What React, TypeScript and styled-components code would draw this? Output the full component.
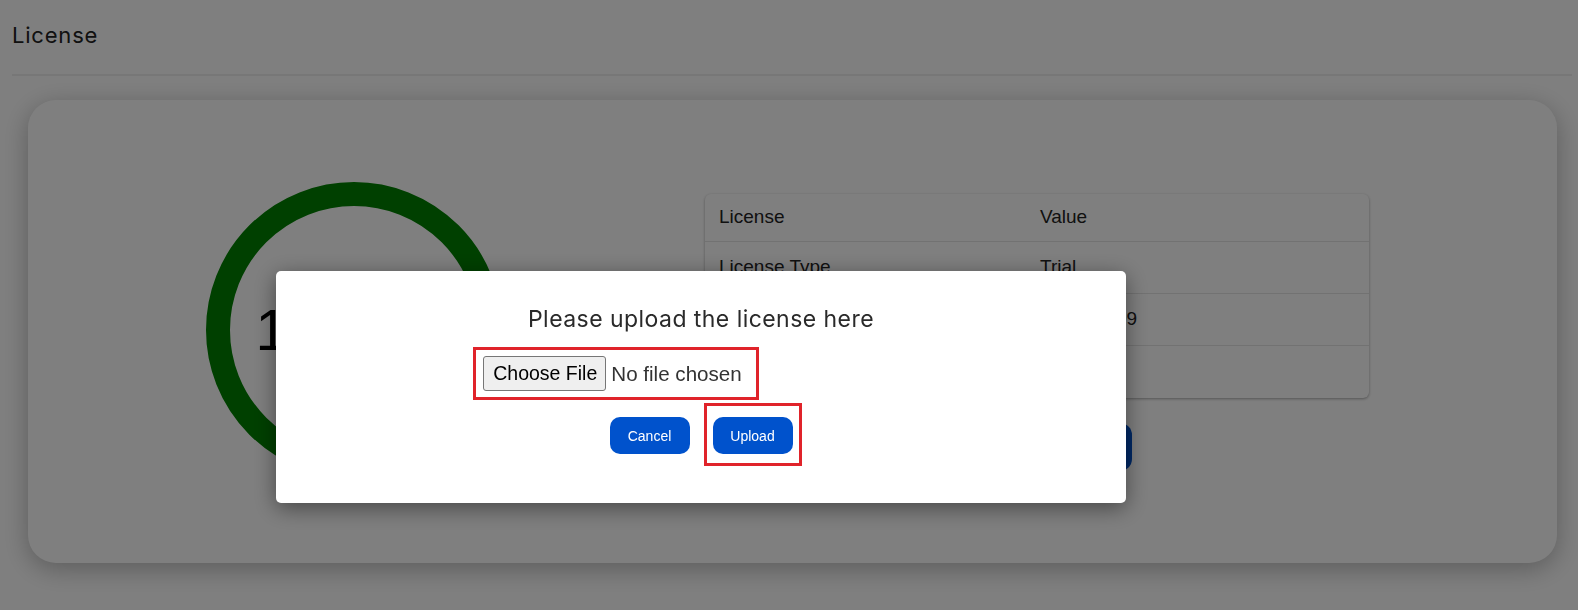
import React from "react";
import styled, { createGlobalStyle } from "styled-components";

const Global = createGlobalStyle`
  html, body { margin: 0; padding: 0; background: #ffffff; }
  body { font-family: "Liberation Sans", Arial, sans-serif; }
  * { box-sizing: border-box; }
`;

const Page = styled.div`
  width: 1578px;
  height: 610px;
  padding: 0 6px 0 12px;
  overflow: hidden;
`;

const PageTitle = styled.h1`
  margin: 0;
  padding: 20px 0 24px;
  font-family: "Inter", sans-serif;
  font-weight: 400;
  font-size: 22px;
  letter-spacing: 0.8px;
  line-height: 30px;
  color: #222;
  border-bottom: 2px solid #eeeeee;
`;

const Card = styled.div`
  margin: 24px 15px 0 16px;
  height: 463px;
  background: #fff;
  border-radius: 28px;
  box-shadow: 0 6px 26px rgba(0, 0, 0, 0.28);
  display: flex;
  align-items: center;
`;

const RingCol = styled.div`
  width: 652px;
  display: flex;
  justify-content: center;
  align-items: center;
`;

const Ring = styled.div`
  display: grid;
  width: 296px;
  height: 296px;
  margin-top: -4px;
  & > * { grid-area: 1 / 1; }
`;

const RingLabel = styled.div`
  align-self: center;
  justify-self: center;
  padding-left: 6px;
  font-family: "Liberation Sans", Arial, sans-serif;
  font-size: 58px;
  color: #000;
  white-space: nowrap;
`;

const InfoCol = styled.div`
  margin-left: 25px;
  width: 664px;
  display: flex;
  flex-direction: column;
  align-items: center;
  gap: 25px;
  margin-top: 1px;
`;

const Table = styled.table`
  width: 664px;
  border-collapse: separate;
  border-spacing: 0;
  border-radius: 6px;
  box-shadow: 0 1px 3px rgba(0, 0, 0, 0.35);
  font-family: "Liberation Sans", Arial, sans-serif;
  font-size: 19px;
  color: #222;
  background: #fff;
`;

const Cell = styled.td<{ $first?: boolean; $head?: boolean; $last?: boolean }>`
  padding: 0 14px;
  height: ${(p) => (p.$head ? "48px" : "52px")};
  width: ${(p) => (p.$first ? "321px" : "auto")};
  border-bottom: ${(p) => (p.$last ? "none" : "1px solid #e4e4e4")};
  text-align: left;
  font-weight: 400;
`;

const MainButton = styled.button`
  width: 190px;
  height: 48px;
  border: none;
  border-radius: 12px;
  background: #0052cc;
  color: #fff;
  font-family: "Liberation Sans", Arial, sans-serif;
  font-size: 17px;
`;

const Overlay = styled.div`
  position: fixed;
  inset: 0;
  background: rgba(0, 0, 0, 0.5);
`;

const Modal = styled.div`
  position: absolute;
  left: 276px;
  top: 271px;
  width: 850px;
  height: 232px;
  background: #fff;
  border-radius: 5px;
  box-shadow: 0 5px 22px rgba(0, 0, 0, 0.45);
  padding-top: 34px;
  display: flex;
  flex-direction: column;
  align-items: center;
`;

const ModalTitle = styled.h2`
  margin: 0;
  font-family: "Inter", sans-serif;
  font-weight: 400;
  font-size: 23px;
  letter-spacing: 0.45px;
  line-height: 28px;
  color: #2a2a2a;
`;

const FileRow = styled.div`
  margin-top: 14px;
  width: 100%;
  display: flex;
  justify-content: center;
  padding-right: 170px;
`;

const Highlight = styled.div<{ $pad: string }>`
  border: 3px solid #e0232a;
  padding: ${(p) => p.$pad};
  display: flex;
  align-items: center;
`;

const ChooseButton = styled.button`
  height: 35px;
  padding: 0 8px 0 9px;
  background: #efefef;
  border: 1px solid #767676;
  border-radius: 3px;
  font-family: "Liberation Sans", Arial, sans-serif;
  font-size: 19.5px;
  color: #000;
`;

const NoFile = styled.span`
  margin-left: 5px;
  font-family: "Liberation Sans", Arial, sans-serif;
  font-size: 20.6px;
  color: #333;
`;

const ActionRow = styled.div`
  margin-top: 3px;
  padding-left: 9px;
  display: flex;
  align-items: flex-start;
  gap: 14px;
`;

const ActionButton = styled.button`
  width: 80px;
  height: 37px;
  border: none;
  border-radius: 10px;
  background: #0052cc;
  color: #fff;
  font-family: "Liberation Sans", Arial, sans-serif;
  font-size: 14px;
  padding: 0;
`;

const CancelButton = styled(ActionButton)`
  margin-top: 14px;
`;

const rows: [string, string][] = [
  ["License Type", "Trial"],
  ["Expiry Date", "2025-01-09"],
  ["Days Remaining", "14"],
];

export default function App() {
  return (
    <>
      <Global />
      <Page>
        <PageTitle>License</PageTitle>
        <Card>
          <RingCol>
            <Ring>
              <svg width="296" height="296" viewBox="0 0 296 296">
                <circle cx="148" cy="148" r="136" fill="none" stroke="#008000" strokeWidth="24" />
              </svg>
              <RingLabel>14 days</RingLabel>
            </Ring>
          </RingCol>
          <InfoCol>
            <Table>
              <thead>
                <tr>
                  <Cell as="th" $head $first>License</Cell>
                  <Cell as="th" $head>Value</Cell>
                </tr>
              </thead>
              <tbody>
                {rows.map(([k, v], i) => (
                  <tr key={k}>
                    <Cell $first $last={i === rows.length - 1}>{k}</Cell>
                    <Cell $last={i === rows.length - 1}>{v}</Cell>
                  </tr>
                ))}
              </tbody>
            </Table>
            <MainButton>Upload License</MainButton>
          </InfoCol>
        </Card>
      </Page>
      <Overlay>
        <Modal>
          <ModalTitle>Please upload the license here</ModalTitle>
          <FileRow>
            <Highlight $pad="6px 14px 6px 7px">
              <ChooseButton>Choose File</ChooseButton>
              <NoFile>No file chosen</NoFile>
            </Highlight>
          </FileRow>
          <ActionRow>
            <CancelButton>Cancel</CancelButton>
            <Highlight $pad="11px 6px 9px 6px">
              <ActionButton>Upload</ActionButton>
            </Highlight>
          </ActionRow>
        </Modal>
      </Overlay>
    </>
  );
}
